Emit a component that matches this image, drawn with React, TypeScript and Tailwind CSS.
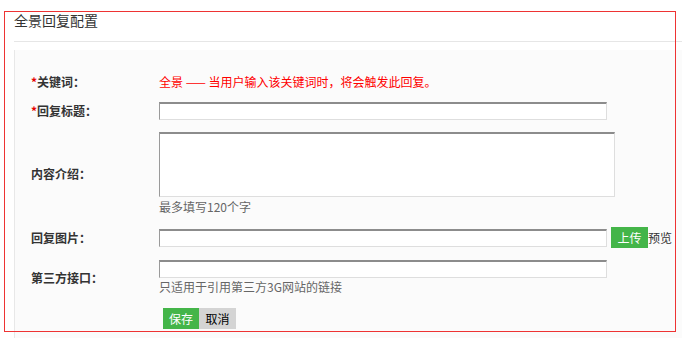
import React from "react";

const font = { fontFamily: '"Noto Sans CJK SC", "Noto Sans", sans-serif' };

const inputCls =
  "h-[18px] bg-white border border-[#dedede] border-t-2 border-t-[#8c8c8c] border-l-[#9a9a9a] outline-none";

const Label = ({ text, required }: { text: string; required?: boolean }) => (
  <div className="w-[128px] shrink-0 text-[12px] font-bold text-[#333]">
    {required && <span className="text-[#e60000]">*</span>}
    {text}
  </div>
);

const App = () => {
  return (
    <div className="relative h-[338px] w-full overflow-hidden bg-white flex flex-col" style={font}>
      {/* header */}
      <div className="ml-[14px] h-[42px] shrink-0 border-b border-[#e6e6e6] pt-[10px]">
        <h1 className="text-[14px] leading-[20px] text-[#333]">全景回复配置</h1>
      </div>

      <div className="mt-[8px] ml-[14px] flex-1 border-l border-[#e8e8e8] bg-[#fbfbfb] pl-[16px] pt-[22px]">
        <div className="flex items-center h-[20px]">
          <Label text="关键词：" required />
          <span className="text-[12px] text-[#ff0000]">
            全景 —— 当用户输入该关键词时，将会触发此回复。
          </span>
        </div>

        <div className="mt-[10px] flex items-center">
          <Label text="回复标题：" required />
          <input className={`${inputCls} w-[448px]`} />
        </div>

        <div className="mt-[12px] flex items-center">
          <Label text="内容介绍：" />
          <div className="flex flex-col">
            <textarea className="h-[65px] w-[456px] resize-none bg-white border border-[#dedede] border-t-2 border-t-[#8c8c8c] border-l-[#9a9a9a] outline-none" />
            <span className="text-[12px] leading-[19px] text-[#666]">最多填写120个字</span>
          </div>
        </div>

        <div className="mt-[11px] flex items-center h-[21px]">
          <Label text="回复图片：" />
          <input className={`${inputCls} w-[448px]`} />
          <button className="ml-[4px] h-[21px] w-[37px] bg-[#44b549] text-[12px] text-white">上传</button>
          <span className="text-[12px] text-[#333]">预览</span>
        </div>

        <div className="mt-[12px] flex items-center">
          <Label text="第三方接口：" />
          <div className="flex flex-col">
            <input className={`${inputCls} w-[448px]`} />
            <span className="text-[12px] leading-[18px] text-[#666]">只适用于引用第三方3G网站的链接</span>
          </div>
        </div>

        <div className="mt-[12px] ml-[132px] flex">
          <button className="h-[21px] w-[36px] bg-[#44b549] text-[12px] text-white">保存</button>
          <button className="h-[21px] w-[37px] bg-[#d4d4d4] text-[12px] text-black">取消</button>
        </div>
      </div>

      {/* highlight box */}
      <div className="pointer-events-none absolute left-[4px] top-[11px] h-[321px] w-[672px] border border-[#ee3333]" />
    </div>
  );
};

export default App;
